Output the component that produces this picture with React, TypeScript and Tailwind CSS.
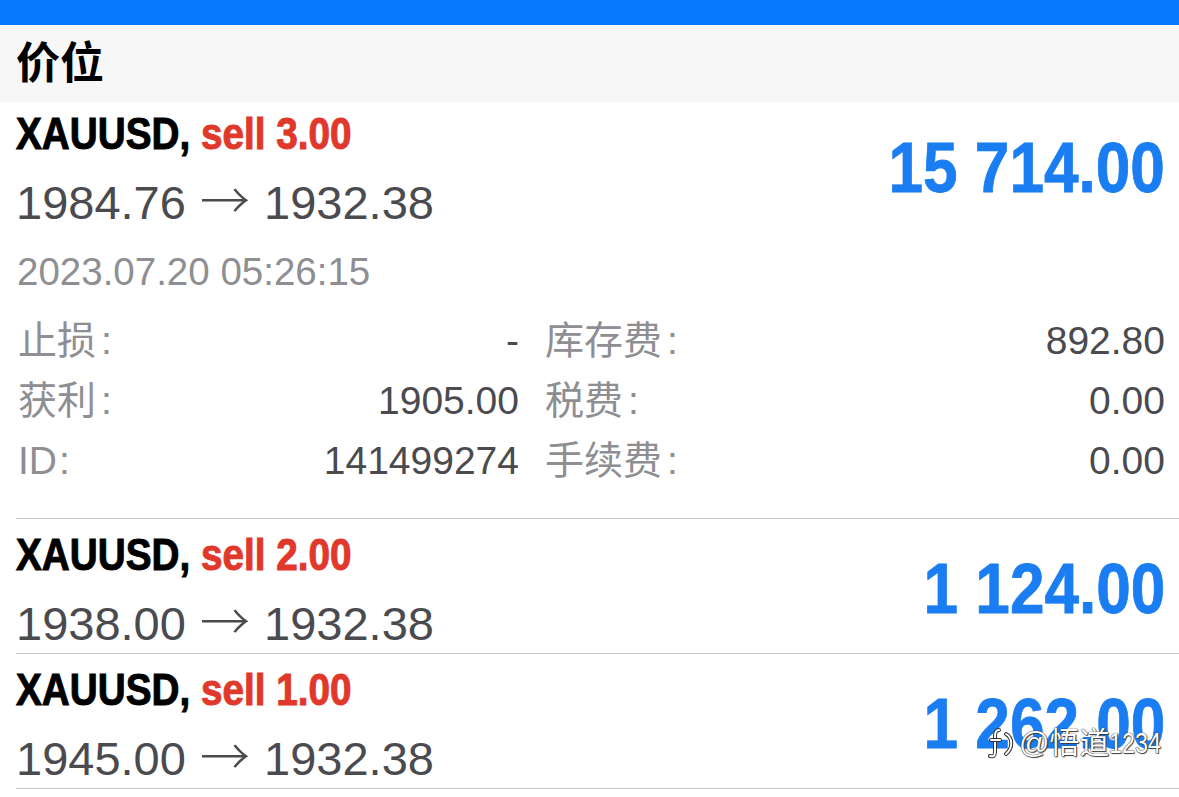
import React from "react";

const FONT = { fontFamily: '"Liberation Sans", "Noto Sans CJK SC", Arial, sans-serif' };

type Pos = { lots: string; open: string; cur: string; profit: string };

function Title({ lots }: { lots: string }) {
  return (
    <div className="h-[60px] leading-[60px] text-[45px] font-bold whitespace-nowrap text-black">
      <span className="inline-block origin-left scale-x-[0.86] [-webkit-text-stroke:1px_currentColor]">
        XAUUSD, <span className="text-[#e0382a]">sell {lots}</span>
      </span>
    </div>
  );
}

function Top({ p }: { p: Pos }) {
  return (
    <div className="flex h-[126px] items-center justify-between">
      <div className="flex flex-col">
        <Title lots={p.lots} />
        <div className="h-[66px] whitespace-nowrap text-[47px] leading-[66px] text-[#4a4a4f]">
          {p.open}{" "}
          <span className="inline-block w-[52px] text-center font-['Noto_Sans_CJK_SC'] text-[50px] font-light">→</span>{" "}
          {p.cur}
        </div>
      </div>
      <div className="text-[71px] font-bold leading-none text-[#1a7df2] whitespace-nowrap">
        <span className="inline-block origin-right scale-x-[0.875] [-webkit-text-stroke:0.8px_currentColor]">
          {p.profit}
        </span>
      </div>
    </div>
  );
}

function Detail({ label, value, cjk = true }: { label: string; value: string; cjk?: boolean }) {
  return (
    <div className="flex h-[60px] items-center justify-between text-[39px] leading-[60px]">
      <span className="text-[#8e8e93]">
        {label}
        <span className={cjk ? "ml-[5px]" : "ml-[2px]"}>:</span>
      </span>
      <span className="text-[#4a4a4f]">{value}</span>
    </div>
  );
}

export default function App() {
  const rest: Pos[] = [
    { lots: "2.00", open: "1938.00", cur: "1932.38", profit: "1 124.00" },
    { lots: "1.00", open: "1945.00", cur: "1932.38", profit: "1 262.00" },
  ];
  return (
    <div className="relative h-[797px] w-[1179px] overflow-hidden bg-white" style={FONT}>
      <div className="h-[25px] bg-[#057aff]" />
      <div className="flex h-[77px] items-center bg-[#f7f7f7] pl-4">
        <span className="text-[44px] font-bold leading-none text-black">价位</span>
      </div>

      <div className="ml-4 border-b border-[#c8c7cc] pt-[2px] pr-[14px] pb-[27px]">
        <Top p={{ lots: "3.00", open: "1984.76", cur: "1932.38", profit: "15 714.00" }} />
        <div className="mt-[20px] ml-[1px] h-[44px] text-[38.5px] leading-[44px] text-[#8e8e93]">
          2023.07.20 05:26:15
        </div>
        <div className="mt-[17px] ml-[2px] grid grid-cols-[501px_1fr] gap-x-[26px]">
          <Detail label="止损" value="-" />
          <Detail label="库存费" value="892.80" />
          <Detail label="获利" value="1905.00" />
          <Detail label="税费" value="0.00" />
          <Detail label="ID" value="141499274" cjk={false} />
          <Detail label="手续费" value="0.00" />
        </div>
      </div>

      {rest.map((p) => (
        <div key={p.lots} className="ml-4 border-b border-[#c8c7cc] pt-[6px] pr-[14px] pb-[2px]">
          <Top p={p} />
        </div>
      ))}

      <div className="absolute left-[988px] top-[726px] flex items-center gap-[3px] text-[30px] leading-none text-white [text-shadow:0_0_1px_#222,0_0_1px_#222,1px_1px_1px_#444]">
        <svg width="28" height="34" viewBox="0 0 28 34" fill="none">
          <path d="M11 4 C8 4 7 7 7 10 L7 26 C7 30 5 31 2 30" stroke="#333" strokeWidth="4" strokeLinecap="round" />
          <path d="M11 4 C8 4 7 7 7 10 L7 26 C7 30 5 31 2 30" stroke="#fff" strokeWidth="2" strokeLinecap="round" />
          <path d="M3 14 L12 14" stroke="#333" strokeWidth="4" strokeLinecap="round" />
          <path d="M3 14 L12 14" stroke="#fff" strokeWidth="2" strokeLinecap="round" />
          <path d="M18 8 C25 12 25 22 18 28" stroke="#333" strokeWidth="4" strokeLinecap="round" />
          <path d="M18 8 C25 12 25 22 18 28" stroke="#fff" strokeWidth="2" strokeLinecap="round" />
        </svg>
        <span className="whitespace-nowrap">
          @悟道<span className="inline-block origin-left scale-x-[0.78]">1234</span>
        </span>
      </div>
    </div>
  );
}
